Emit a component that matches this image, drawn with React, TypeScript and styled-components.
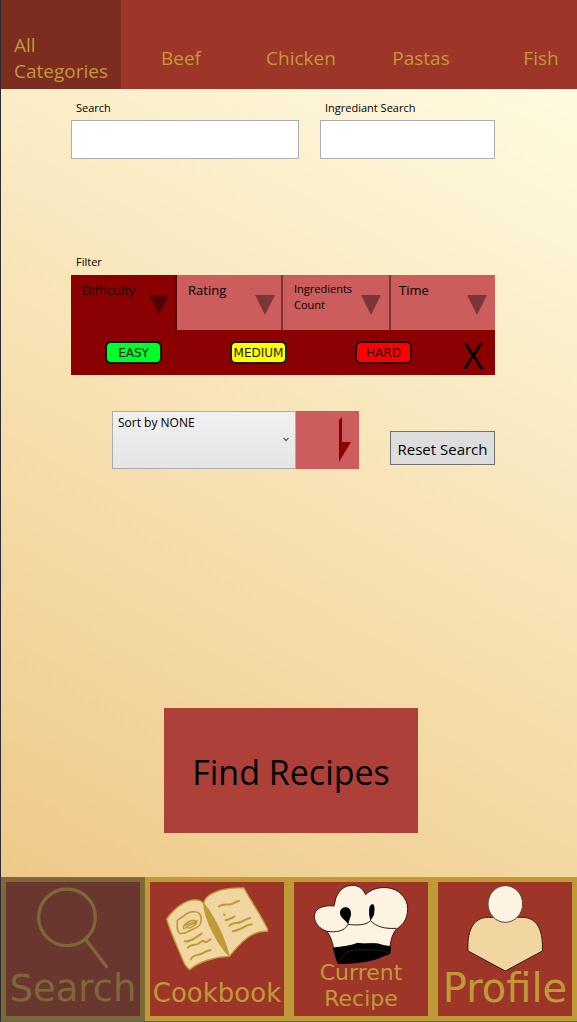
import React, { useState } from "react";
import styled, { createGlobalStyle } from "styled-components";

const GlobalStyle = createGlobalStyle`
  *, *::before, *::after { box-sizing: border-box; }
  body { margin: 0; font-family: "Open Sans", "Noto Sans", sans-serif; color: #000; }
  button, input, select { font-family: inherit; color: inherit; border-radius: 0; margin: 0; }
  button { cursor: pointer; }
`;

const Page = styled.div`
  min-height: 100vh;
  display: flex;
  flex-direction: column;
  border-left: 1px solid #2b2c35;
  border-bottom: 1px solid #1878ac;
`;

const CategoryBar = styled.nav`
  display: flex;
  height: 89px;
  overflow: hidden;
  background: #9d3628;
`;

const Category = styled.button<{ $active?: boolean }>`
  flex: 0 0 120px;
  display: flex;
  justify-content: center;
  align-items: flex-end;
  border: 0;
  padding: 0 0 ${(p) => (p.$active ? 5 : 18)}px;
  background: ${(p) => (p.$active ? "#7d2c20" : "transparent")};
  color: #c19a38;
  font-size: 19px;
  line-height: 26px;
  text-align: left;
`;

const Main = styled.main`
  flex: 1;
  display: flex;
  flex-direction: column;
  background: linear-gradient(29deg, #eec988 0%, #fffbe0 100%);
`;

const Panel = styled.section`
  display: flex;
  flex-direction: column;
  padding: 11px 82px 0 70px;
`;

const Fields = styled.div`
  display: grid;
  grid-template-columns: 228fr 175fr;
  gap: 21px;
  margin-bottom: 95px;
`;

const Field = styled.div`
  display: flex;
  flex-direction: column;
  gap: 4px;
  min-width: 0;
`;

const Label = styled.label`
  padding-left: 5px;
  font-size: 11px;
  line-height: 16px;
`;

const TextBox = styled.input`
  width: 100%;
  height: 39px;
  padding: 0 6px;
  border: 1px solid #abadb3;
  background: #fff;
  font-size: 13px;
`;

const FilterTitle = styled.h2`
  margin: 0 0 5px;
  padding-left: 5px;
  font-size: 11px;
  font-weight: 400;
  line-height: 16px;
`;

const FilterTabs = styled.div`
  display: grid;
  grid-template-columns: repeat(4, 1fr);
  height: 55px;
`;

const FilterTab = styled.button<{ $active?: boolean; $small?: boolean; $edge: "right" | "left" | "none" }>`
  display: flex;
  justify-content: space-between;
  min-width: 0;
  padding: ${(p) => (p.$small ? 6 : 7)}px 0 0 ${(p) => (p.$edge === "left" ? 8 : 11)}px;
  border: 0 solid ${(p) => (p.$active ? "#530000" : "#7b3737")};
  border-right-width: ${(p) => (p.$edge === "right" ? 2 : 0)}px;
  border-left-width: ${(p) => (p.$edge === "left" ? 2 : 0)}px;
  background: ${(p) => (p.$active ? "#8b0000" : "#cd5c5c")};
  color: ${(p) => (p.$active ? "#1c0000" : "#000")};
  font-size: ${(p) => (p.$small ? 11 : 13)}px;
  line-height: 16px;
  text-align: left;

  svg {
    flex: none;
    margin: ${(p) => (p.$small ? 14 : 13)}px ${(p) => (p.$edge === "right" ? 6 : 8)}px 0 0;
    fill: ${(p) => (p.$active ? "#530000" : "#7b3737")};
  }
`;

const TabText = styled.span`
  width: 0;
  white-space: pre;
`;

const Levels = styled.div`
  display: grid;
  grid-template-columns: repeat(3, 125fr) 49fr;
  align-items: center;
  justify-items: center;
  height: 45px;
  background: #8b0000;
`;

const Level = styled.button<{ $color: string; $ink: string }>`
  width: 57px;
  height: 23px;
  padding: 0;
  border: 2px solid ${(p) => p.$ink};
  border-radius: 6px;
  background: ${(p) => p.$color};
  color: ${(p) => p.$ink};
  font-family: "DejaVu Sans", sans-serif;
  font-size: 12px;
  line-height: 20px;
  display: flex;
  justify-content: center;
`;

const CloseButton = styled.button`
  padding: 6px 0 0 5px;
  border: 0;
  background: none;
  font-size: 36px;
  line-height: 36px;
`;

const SortRow = styled.div`
  display: flex;
  align-items: flex-end;
  margin-top: 36px;
  padding-left: 41px;
`;

const SelectWrap = styled.div`
  position: relative;
  flex: 0 1 184px;
  min-width: 0;

  svg {
    position: absolute;
    right: 7px;
    top: 26px;
    pointer-events: none;
  }
`;

const SortSelect = styled.select`
  display: block;
  appearance: none;
  width: 100%;
  height: 58px;
  padding: 0 20px 34px 5px;
  border: 1px solid #acacac;
  background: linear-gradient(#f0f0f0, #e5e5e5);
  font-size: 12px;
  line-height: 16px;
`;

const DirectionButton = styled.button`
  flex: none;
  width: 63px;
  height: 58px;
  padding: 0;
  border: 0;
  background: #cd5c5c;

  svg { display: block; }
`;

const ResetButton = styled.button`
  flex: none;
  width: 105px;
  height: 34px;
  margin: 0 0 4px auto;
  padding: 2px 0 0;
  border: 1px solid #707070;
  background: #ddd;
  font-size: 15px;
  white-space: nowrap;
`;

const FindArea = styled.div`
  margin-top: auto;
  padding: 40px 159px 44px 163px;
`;

const FindButton = styled.button`
  width: 100%;
  height: 125px;
  padding: 2px 0 0;
  border: 0;
  background: #ad4039;
  font-size: 34px;
  white-space: nowrap;
`;

const TabBar = styled.nav`
  display: grid;
  grid-template-columns: repeat(4, 1fr);
`;

const Tile = styled.a<{ $active?: boolean }>`
  display: grid;
  grid-template: 134px / minmax(0, 1fr);
  justify-items: center;
  border: 5px solid ${(p) => (p.$active ? "#7d6838" : "#c19a38")};
  background: ${(p) => (p.$active ? "#693630" : "#9d3628")};
  color: ${(p) => (p.$active ? "#7d6838" : "#c19a38")};
  text-decoration: none;

  svg {
    grid-area: 1 / 1;
    width: 134px;
    height: 134px;
  }
`;

const TileLabel = styled.span<{ $size: number; $line: number; $bottom?: number }>`
  grid-area: 1 / 1;
  align-self: end;
  padding-bottom: ${(p) => p.$bottom ?? 0}px;
  font-family: "DejaVu Sans", sans-serif;
  font-size: ${(p) => p.$size}px;
  line-height: ${(p) => p.$line}px;
  text-align: center;
`;

const CATEGORIES = ["All Categories", "Beef", "Chicken", "Pastas", "Fish"];

const FILTERS = [
  { name: "Difficulty", edge: "right" },
  { name: "Rating", edge: "right" },
  { name: "Ingredients\nCount", edge: "none", small: true },
  { name: "Time", edge: "left" },
] as const;

const LEVELS = [
  { name: "EASY", color: "#00ff2a", ink: "#001a04" },
  { name: "MEDIUM", color: "#ffff00", ink: "#1e1a00" },
  { name: "HARD", color: "#ff0000", ink: "#240000" },
];

const SearchIcon = () => (
  <svg viewBox="18 36 402 402" fill="none" stroke="#7d6838" strokeWidth="10" aria-hidden="true">
    <circle cx="201" cy="142" r="85" />
    <path d="M256 207L322 293" />
  </svg>
);

const BookIcon = () => (
  <svg viewBox="30 36 402 402" fill="none" stroke="#c19a38" strokeWidth="4" strokeLinejoin="round" strokeLinecap="round" aria-hidden="true">
    <path fill="#f0d6a0" d="M80 147C104 113 145 80 180 92C185 94 188 97 191 101C194 73 240 52 312 54C330 90 360 130 383 178V183C340 182 310 207 268 259C225 260 174 276 149 299C138 292 134 283 130 274C115 235 92 190 80 147Z" />
    <path fill="#c19a38" d="M191 100C194 150 233 220 267 258C249 188 215 130 191 100Z" />
    <path strokeWidth="5" d="M112 151L139 132C155 122 177 122 182 137C187 155 180 170 162 176C148 181 136 194 119 190C108 181 112 165 112 151Z" />
    <path d="M130 173C133 158 152 148 172 153C168 167 152 176 141 173C136 172 134 176 130 176M134 166L167 155M140 170L170 158M140 160C148 154 158 150 164 151" />
    <path strokeWidth="6" d="M134 214C155 217 165 202 185 191M143 233C157 219 164 227 173 222C184 216 188 208 195 216C202 218 205 211 212 208M153 268C156 253 175 258 187 250C197 244 202 242 212 240M237 109C252 99 264 107 275 102C284 98 290 94 297 93M257 151C266 150 274 145 283 140M268 168C278 155 292 162 303 156C312 151 321 147 330 144M278 184C293 180 303 178 314 170C322 164 329 164 335 163M252 134L254 135" />
  </svg>
);

const HatIcon = () => (
  <svg viewBox="27 36 402 402" fill="none" stroke="#3a1510" strokeWidth="3" strokeLinejoin="round" aria-hidden="true">
    <path fill="#fcf3e3" d="M146 236C142 216 137 199 126 184C105 178 88 159 88 139C88 117 112 104 147 108C151 96 150 84 158 73C168 54 187 45 206 46C226 48 236 61 242 74C257 58 280 51 306 53C341 56 368 84 368 116C368 145 354 166 333 178C323 192 318 207 316 225C314 236 316 243 314 249L160 279Z" />
    <path fill="#000" stroke="#000" d="M146 234C171 231 198 228 218 220C240 224 258 219 280 222C292 226 304 229 317 229L314 251C296 256 285 264 266 269C230 278 192 281 159 280C153 266 149 250 146 234Z" />
    <path d="M126 184C151 188 180 184 189 163C209 166 243 167 257 152C273 170 299 177 333 175" />
    <path strokeWidth="2" stroke="#4a2019" d="M161 275C174 250 196 237 220 240C253 242 284 233 311 250" />
    <path fill="#000" stroke="none" d="M190 164C181 149 163 142 165 127C166 118 173 112 184 112C194 113 199 123 198 134C196 145 191 151 190 164Z" />
    <path fill="#000" stroke="none" d="M257 153C252 138 251 126 253 113C255 105 260 101 265 103C270 109 269 124 267 134C264 142 259 145 257 153Z" />
  </svg>
);

const ProfileIcon = () => (
  <svg viewBox="33 36 402 402" stroke="#35190f" strokeWidth="3" strokeLinejoin="round" aria-hidden="true">
    <path fill="#f0d6a0" d="M123 243C120 190 134 142 184 142H286C335 142 349 190 346 243L235 303Z" />
    <ellipse cx="235" cy="102" rx="52" ry="55" fill="#fcf3e3" stroke="#5a4238" />
  </svg>
);

export default function App() {
  const [search, setSearch] = useState("");
  const [ingredient, setIngredient] = useState("");

  return (
    <>
      <GlobalStyle />
      <Page>
        <CategoryBar aria-label="Categories">
          {CATEGORIES.map((name, i) => (
            <Category key={name} type="button" $active={i === 0}>
              {i === 0 ? <span>All<br />Categories</span> : name}
            </Category>
          ))}
        </CategoryBar>
        <Main>
          <Panel>
            <Fields>
              <Field>
                <Label htmlFor="search">Search</Label>
                <TextBox id="search" value={search} onChange={(e) => setSearch(e.target.value)} />
              </Field>
              <Field>
                <Label htmlFor="ingredient">Ingrediant Search</Label>
                <TextBox id="ingredient" value={ingredient} onChange={(e) => setIngredient(e.target.value)} />
              </Field>
            </Fields>
            <FilterTitle>Filter</FilterTitle>
            <FilterTabs>
              {FILTERS.map((f, i) => (
                <FilterTab key={f.name} type="button" $active={i === 0} $small={"small" in f} $edge={f.edge}>
                  <TabText>{f.name}</TabText>
                  <svg width="20" height="20" viewBox="0 0 20 20" aria-hidden="true">
                    <path d="M0 0H20L10 20Z" />
                  </svg>
                </FilterTab>
              ))}
            </FilterTabs>
            <Levels>
              {LEVELS.map((l) => (
                <Level key={l.name} type="button" $color={l.color} $ink={l.ink}>{l.name}</Level>
              ))}
              <CloseButton type="button">X</CloseButton>
            </Levels>
            <SortRow>
              <SelectWrap>
                <SortSelect aria-label="Sort by">
                  <option>Sort by NONE</option>
                </SortSelect>
                <svg width="6" height="5" viewBox="0 0 6 5" fill="none" stroke="#606060" strokeWidth="1.3" aria-hidden="true">
                  <path d="M0.5 1L3 3.5L5.5 1" />
                </svg>
              </SelectWrap>
              <DirectionButton type="button" aria-label="Sort direction">
                <svg width="63" height="58" viewBox="0 0 63 58" fill="#8b0000" aria-hidden="true">
                  <path d="M43 9L46 6V31H55L43 51Z" />
                </svg>
              </DirectionButton>
              <ResetButton type="button">Reset Search</ResetButton>
            </SortRow>
          </Panel>
          <FindArea>
            <FindButton type="button">Find Recipes</FindButton>
          </FindArea>
        </Main>
        <TabBar aria-label="Main">
          <Tile href="#search" $active>
            <SearchIcon />
            <TileLabel $size={37} $line={54}>Search</TileLabel>
          </Tile>
          <Tile href="#cookbook">
            <BookIcon />
            <TileLabel $size={26} $line={46}>Cookbook</TileLabel>
          </Tile>
          <Tile href="#current">
            <HatIcon />
            <TileLabel $size={22} $line={26} $bottom={4}>Current<br />Recipe</TileLabel>
          </Tile>
          <Tile href="#profile">
            <ProfileIcon />
            <TileLabel $size={40} $line={56}>Profile</TileLabel>
          </Tile>
        </TabBar>
      </Page>
    </>
  );
}
